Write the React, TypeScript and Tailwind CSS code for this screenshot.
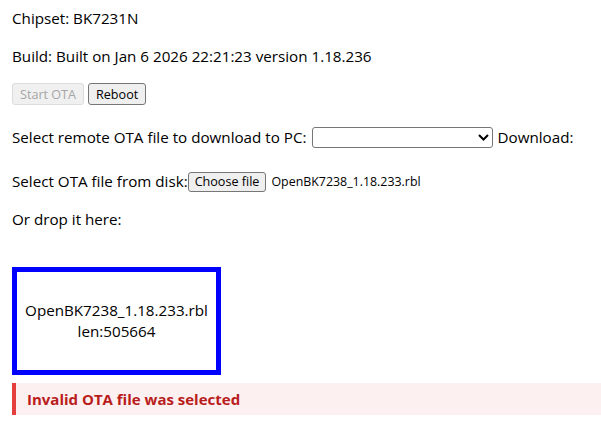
import React from 'react';

const font = { fontFamily: '"Open Sans", "Noto Sans", sans-serif' };

const btnBase = 'inline-flex items-center h-[22px] px-[7px] text-[12.6px] rounded-[3px] border';

export default function App() {
  return (
    <div className="min-h-screen bg-white text-black text-[15.2px] leading-[21px] pl-[12px] pt-[8px] overflow-hidden" style={font}>
      <div className="h-[21px]">Chipset: BK7231N</div>
      <div className="h-[21px] mt-[17px]">Build: Built on Jan 6 2026 22:21:23 version 1.18.236</div>

      <div className="flex items-center gap-[4px] h-[22px] mt-[16px]">
        <button disabled className={`${btnBase} bg-[#f0f0f0] border-[#dcdcdc] text-[#a6a6a6]`}>Start OTA</button>
        <button className={`${btnBase} bg-[#efefef] border-[#767676] text-black`}>Reboot</button>
      </div>

      <div className="flex items-center h-[21px] mt-[22px] whitespace-nowrap">
        <span>Select remote OTA file to download to PC:</span>
        <div className="ml-[5px] w-[181px] h-[21px] border border-[#767676] rounded-[3px] bg-white flex items-center justify-end pr-[3px]">
          <svg width="11" height="7" viewBox="0 0 11 7" fill="none">
            <path d="M1 1l4.5 4.5L10 1" stroke="#000" strokeWidth="2" />
          </svg>
        </div>
        <span className="ml-[5px]">Download:</span>
      </div>

      <div className="flex items-center h-[21px] mt-[23px] whitespace-nowrap">
        <span>Select OTA file from disk:</span>
        <button className="inline-flex items-center h-[20px] px-[6px] text-[12.6px] rounded-[3px] border border-[#767676] bg-[#efefef] text-black">
          Choose file
        </button>
        <span className="ml-[5px] text-[12.4px]">OpenBK7238_1.18.233.rbl</span>
      </div>

      <div className="h-[21px] mt-[17px]">Or drop it here:</div>

      <div className="mt-[37px] w-[209px] h-[108px] border-[5px] border-[#0000ff] flex flex-col items-center justify-center text-center">
        <div>OpenBK7238_1.18.233.rbl</div>
        <div>len:505664</div>
      </div>

      <div className="mt-[8px] h-[32px] bg-[#fdf0f0] border-l-[4px] border-[#e53e3e] flex items-center pl-[11px] font-bold text-[15px] text-[#b91c1c]">
        Invalid OTA file was selected
      </div>
    </div>
  );
}
